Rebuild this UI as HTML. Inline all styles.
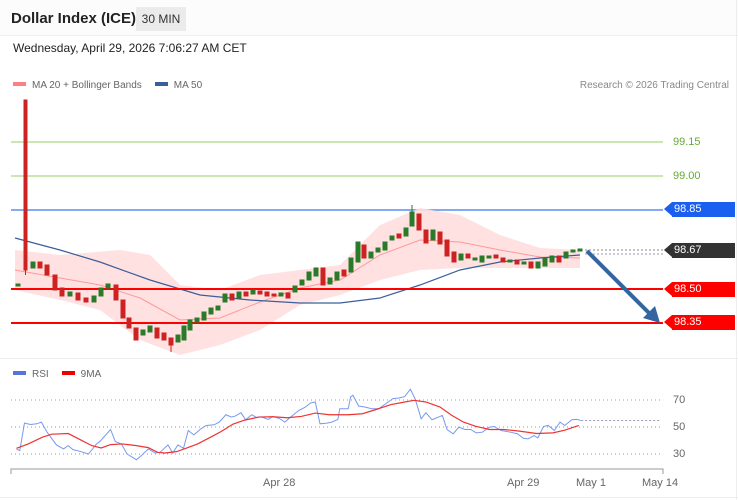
<!DOCTYPE html>
<html><head><meta charset="utf-8"><style>
*{margin:0;padding:0;box-sizing:border-box}
body{width:738px;height:500px;background:#fff;font-family:"Liberation Sans",sans-serif;position:relative;overflow:hidden}
.hdr{position:absolute;left:0;top:0;width:738px;height:36px;background:#fcfcfc;border-bottom:1px solid #f0f0f0}
.t{position:absolute;left:11px;top:10px;font-size:15px;font-weight:bold;color:#222}
.tf{position:absolute;left:136px;top:7px;width:50px;height:24px;background:#ebebeb;font-size:12px;color:#333;text-align:center;line-height:24px}
.d{position:absolute;left:13px;top:41px;font-size:12px;color:#222}
.lg{position:absolute;font-size:10px;color:#666}
.sw{display:inline-block;width:13px;height:4px;vertical-align:middle;margin-right:6px;position:relative;top:-1px}
.tag{position:absolute;left:672px;width:63px;height:15px;color:#fff;font-size:11px;line-height:15px;padding-left:2px}
.tag:before{content:"";position:absolute;left:-8px;top:0;border-right:8px solid;border-right-color:inherit;border-top:7.5px solid transparent;border-bottom:7.5px solid transparent}
.ax{position:absolute;font-size:11px;color:#666}
</style></head><body>
<div class="hdr"></div>
<div class="t">Dollar Index (ICE)</div>
<div class="tf">30 MIN</div>
<div class="d">Wednesday, April 29, 2026 7:06:27 AM CET</div>
<div class="lg" style="left:13px;top:80px"><span class="sw" style="background:#ff8080"></span>MA 20 + Bollinger Bands<span class="sw" style="background:#3a5f9a;margin-left:13px"></span>MA 50</div>
<div class="lg" style="right:9px;top:80px;color:#888">Research © 2026 Trading Central</div>
<div class="lg" style="left:13px;top:369px"><span class="sw" style="background:#5577dd"></span>RSI<span class="sw" style="background:#e00;margin-left:13px"></span>9MA</div>
<div style="position:absolute;left:0;top:358px;width:738px;height:1px;background:#eee"></div>
<div style="position:absolute;left:0;top:497px;width:738px;height:1px;background:#eee"></div>
<div style="position:absolute;left:736px;top:0;width:1px;height:500px;background:#eee"></div>
<svg width="738" height="500" style="position:absolute;left:0;top:0">
<line x1="11" y1="142" x2="663" y2="142" stroke="#9c6" stroke-width="1"/>
<line x1="11" y1="176" x2="663" y2="176" stroke="#9c6" stroke-width="1"/>
<line x1="11" y1="210" x2="663" y2="210" stroke="#5b8def" stroke-width="1.5"/>
<polygon fill="#ffdede" opacity="0.9" points="15,250 60,255 120,250 150,255 180,285 220,290 260,275 300,270 340,265 380,225 420,208 460,215 500,235 540,248 580,250 580,268 520,268 460,268 420,270 380,280 340,295 300,305 260,330 220,345 180,355 140,340 100,310 60,300 15,290"/>
<polyline fill="none" stroke="#f99" stroke-width="1" points="15,270 60,278 100,285 140,298 180,320 220,318 260,302 300,288 340,280 380,255 420,240 460,242 500,250 540,257 580,258"/>
<polyline fill="none" stroke="#3a5f9a" stroke-width="1.2" points="15,238 60,250 100,262 150,280 200,295 250,300 300,303 340,303 380,298 420,285 460,270 500,262 540,258 580,255"/>
<line x1="585" y1="250" x2="663" y2="250" stroke="#888" stroke-dasharray="2,2"/>
<line x1="585" y1="254" x2="663" y2="254" stroke="#99b" stroke-dasharray="2,2"/>
<line x1="11" y1="289" x2="663" y2="289" stroke="#f00" stroke-width="2"/>
<line x1="11" y1="323" x2="663" y2="323" stroke="#f00" stroke-width="2"/>
<g stroke-width="1">
<g fill="#c22" stroke="#c22">
<rect x="24" y="100" width="3" height="170"/><line x1="25.5" y1="270" x2="25.5" y2="275"/>
<rect x="38" y="262" width="4" height="6"/><rect x="45" y="265" width="4" height="10"/><rect x="53" y="275" width="4" height="15"/><rect x="60" y="288" width="4" height="8"/><rect x="76" y="293" width="4" height="7"/><rect x="84" y="298" width="4" height="4"/><rect x="114" y="285" width="4" height="15"/><rect x="121" y="300" width="4" height="18"/><rect x="127" y="318" width="4" height="10"/><rect x="134" y="328" width="4" height="12"/><rect x="155" y="328" width="4" height="10"/><rect x="162" y="333" width="4" height="7"/><rect x="169" y="338" width="4" height="7"/><line x1="171" y1="345" x2="171" y2="352"/><rect x="230" y="294" width="4" height="6"/><rect x="244" y="292" width="4" height="4"/><rect x="258" y="291" width="4" height="3"/><rect x="265" y="292" width="4" height="4"/><rect x="272" y="294" width="4" height="2"/><rect x="286" y="293" width="4" height="5"/><rect x="321" y="268" width="4" height="17"/><rect x="342" y="270" width="4" height="6"/><rect x="362" y="245" width="4" height="13"/><rect x="397" y="234" width="4" height="4"/><rect x="417" y="214" width="4" height="16"/><rect x="424" y="230" width="4" height="13"/><rect x="438" y="232" width="4" height="12"/><rect x="445" y="240" width="4" height="16"/><rect x="452" y="252" width="4" height="10"/><rect x="466" y="254" width="4" height="4"/><rect x="494" y="255" width="4" height="3"/><rect x="501" y="258" width="4" height="4"/><rect x="515" y="260" width="4" height="4"/><rect x="529" y="262" width="4" height="6"/><rect x="557" y="256" width="4" height="6"/>
</g>
<g fill="#2a7a2a" stroke="#2a7a2a">
<rect x="16" y="284" width="4" height="2"/><rect x="31" y="262" width="4" height="6"/><rect x="68" y="292" width="4" height="4"/><rect x="92" y="296" width="4" height="6"/><rect x="99" y="288" width="4" height="8"/><rect x="106" y="284" width="4" height="4"/><rect x="141" y="330" width="4" height="5"/><rect x="148" y="326" width="4" height="6"/><rect x="176" y="335" width="4" height="7"/><rect x="182" y="326" width="4" height="14"/><rect x="188" y="320" width="4" height="10"/><rect x="195" y="318" width="4" height="4"/><rect x="202" y="312" width="4" height="8"/><rect x="209" y="308" width="4" height="6"/><rect x="216" y="306" width="4" height="4"/><rect x="223" y="294" width="4" height="8"/><rect x="237" y="292" width="4" height="6"/><rect x="251" y="290" width="4" height="4"/><rect x="279" y="293" width="4" height="3"/><rect x="293" y="286" width="4" height="6"/><rect x="300" y="280" width="4" height="5"/><rect x="307" y="272" width="4" height="8"/><rect x="314" y="268" width="4" height="8"/><rect x="328" y="278" width="4" height="6"/><rect x="335" y="272" width="4" height="8"/><rect x="349" y="258" width="4" height="14"/><rect x="356" y="242" width="4" height="20"/><rect x="369" y="252" width="4" height="6"/><rect x="376" y="248" width="4" height="4"/><rect x="383" y="242" width="4" height="8"/><rect x="390" y="236" width="4" height="4"/><rect x="404" y="228" width="4" height="8"/><rect x="410" y="212" width="4" height="14"/><line x1="412" y1="205" x2="412" y2="212"/><rect x="431" y="230" width="4" height="10"/><rect x="459" y="254" width="4" height="6"/><rect x="473" y="258" width="4" height="2"/><rect x="480" y="256" width="4" height="6"/><rect x="487" y="256" width="4" height="2"/><rect x="508" y="260" width="4" height="2"/><rect x="522" y="262" width="4" height="2"/><rect x="536" y="262" width="4" height="6"/><rect x="543" y="258" width="4" height="8"/><rect x="550" y="256" width="4" height="6"/><rect x="564" y="252" width="4" height="6"/><rect x="571" y="250" width="4" height="2"/><rect x="578" y="249" width="4" height="2"/>
</g>
</g>
<line x1="587" y1="251" x2="652" y2="316" stroke="#3565a0" stroke-width="4"/>
<polygon points="660,323 643,318 655,306" fill="#3565a0"/>
<!-- RSI -->
<line x1="11" y1="400" x2="663" y2="400" stroke="#999" stroke-dasharray="1,3"/>
<line x1="11" y1="427" x2="663" y2="427" stroke="#999" stroke-dasharray="1,3"/>
<line x1="11" y1="454" x2="663" y2="454" stroke="#999" stroke-dasharray="1,3"/>
<path d="M11,474 V469 H663 V474" fill="none" stroke="#999" stroke-width="1"/>
<g transform="translate(0,355) scale(0.4706,0.3356)" fill="none">
<polyline vector-effect="non-scaling-stroke" stroke="#7799ee" stroke-width="1" points="35,280 42,285 52,203 65,207 78,205 88,200 100,230 120,268 135,280 145,270 155,282 170,287 188,295 205,265 212,258 235,222 245,258 258,265 270,295 290,312 300,300 315,280 330,292 340,290 357,268 367,292 378,268 390,278 400,225 412,238 425,222 438,210 455,208 466,200 480,178 492,185 500,182 512,172 522,193 535,178 545,186 555,184 570,192 580,183 595,190 605,200 620,182 635,165 648,156 660,143 670,140 680,205 695,203 705,200 718,192 722,160 740,160 745,125 750,120 762,152 775,155 790,160 805,160 822,143 835,130 848,128 860,124 872,102 882,130 895,190 905,172 918,193 935,183 940,180 950,222 963,235 975,215 988,222 1000,222 1012,232 1025,230 1040,215 1050,213 1065,225 1085,230 1100,235 1112,248 1122,250 1135,240 1143,247 1155,213 1165,210 1178,225 1190,200 1200,210 1215,193 1225,192 1235,195"/>
<line vector-effect="non-scaling-stroke" x1="1235" y1="195" x2="1405" y2="195" stroke="#99b" stroke-dasharray="2,2"/>
<polyline vector-effect="non-scaling-stroke" stroke="#e33" stroke-width="1.2" points="35,278 60,265 90,245 110,236 145,234 170,252 195,270 215,277 235,267 260,265 290,270 315,276 335,290 350,292 375,288 395,278 420,265 450,243 470,228 495,206 520,194 550,185 580,184 610,187 640,183 670,173 700,178 740,178 770,175 800,162 830,148 860,140 880,135 905,140 935,155 960,180 985,200 1010,212 1040,222 1070,222 1100,226 1140,234 1175,232 1200,224 1230,210"/>
</g>
</svg>
<div class="ax" style="left:673px;top:136px;color:#6a3">99.15</div>
<div class="ax" style="left:673px;top:170px;color:#6a3">99.00</div>
<div class="tag" style="top:202px;background:#1a5ff0;border-right-color:#1a5ff0">98.85</div>
<div class="tag" style="top:243px;background:#333;border-right-color:#333">98.67</div>
<div class="tag" style="top:282px;background:#f00;border-right-color:#f00">98.50</div>
<div class="tag" style="top:315px;background:#f00;border-right-color:#f00">98.35</div>
<div class="ax" style="left:673px;top:394px">70</div>
<div class="ax" style="left:673px;top:421px">50</div>
<div class="ax" style="left:673px;top:448px">30</div>
<div class="ax" style="left:263px;top:477px">Apr 28</div>
<div class="ax" style="left:507px;top:477px">Apr 29</div>
<div class="ax" style="left:576px;top:477px">May 1</div>
<div class="ax" style="left:642px;top:477px">May 14</div>
</body></html>
